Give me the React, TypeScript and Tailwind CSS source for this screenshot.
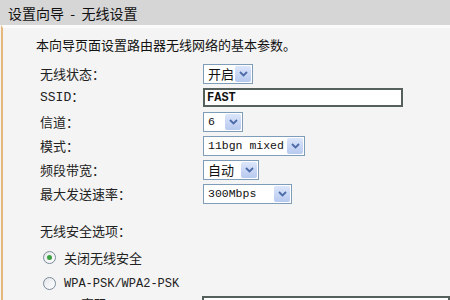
const cjk = "font-['SimSun','Noto_Sans_CJK_SC',sans-serif]"
const mono = "font-['Liberation_Mono','Noto_Sans_CJK_SC',monospace]"

function Arrow() {
  return (
    <span className="flex h-[16px] w-[16px] shrink-0 items-center justify-center rounded-[2px] bg-gradient-to-b from-[#dce6fb] to-[#b7c9ef]">
      <svg width="9" height="6" viewBox="0 0 9 6">
        <path d="M1 1 L4.5 4.5 L8 1" fill="none" stroke="#4d6ba8" strokeWidth="1.8" />
      </svg>
    </span>
  )
}

function Select({ value, width, isMono }: { value: string; width: string; isMono?: boolean }) {
  return (
    <div className={`flex h-[20px] ${width} shrink-0 items-center justify-between border border-[#7f9db9] bg-white pl-[4px] pr-[1px]`}>
      <span className={`${isMono ? `${mono} text-[11.5px]` : `${cjk} text-[13px]`} whitespace-nowrap leading-none text-[#111]`}>{value}</span>
      <Arrow />
    </div>
  )
}

function Row({ label, children, isMono }: { label: string; children: React.ReactNode; isMono?: boolean }) {
  return (
    <div className="flex h-[24px] items-center">
      <span className={`w-[163px] shrink-0 ${isMono ? mono : cjk} text-[13px] text-[#222]`}>{label}</span>
      {children}
    </div>
  )
}

function Radio({ checked, label, isMono }: { checked?: boolean; label: string; isMono?: boolean }) {
  return (
    <div className="flex h-[25px] items-center pl-[40px]">
      <span className="flex h-[13px] w-[13px] items-center justify-center rounded-full border border-[#7a8a99] bg-gradient-to-br from-[#e4e7ea] to-white">
        {checked && <span className="h-[5px] w-[5px] rounded-full bg-[#3aa141]" />}
      </span>
      <span className={`ml-[8px] ${isMono ? `${mono} text-[12px]` : `${cjk} text-[13px]`} text-[#222]`}>{label}</span>
    </div>
  )
}

export default function App() {
  return (
    <div className="h-[300px] w-[450px] overflow-hidden bg-[#f4f4f4]">
      <div className="flex h-[25px] items-center bg-[#d6d6d6] pl-[8px] pt-[1px]">
        <span className={`${cjk} whitespace-pre text-[14px] text-[#111]`}>设置向导  -  无线设置</span>
      </div>
      <div className="ml-[1px] h-[275px] border-l-2 border-t-[3px] border-l-[#e6b77a] border-t-[#fbfbfb] bg-[#f4f4f4]">
        <div className={`pl-[33px] pt-[7px] ${cjk} text-[13px] text-[#111]`}>本向导页面设置路由器无线网络的基本参数。</div>
        <div className="mt-[7px] flex flex-col pl-[37px]">
          <Row label="无线状态：">
            <Select value="开启" width="w-[50px]" />
          </Row>
          <Row label="SSID：" isMono>
            <div className={`flex h-[19px] w-[200px] items-center border-2 border-[#55605c] bg-white pl-[2px] ${mono} text-[12px] font-bold text-[#111]`}>
              FAST
            </div>
          </Row>
          <Row label="信道：">
            <Select value="6" width="w-[40px]" isMono />
          </Row>
          <Row label="模式：">
            <Select value="11bgn mixed" width="w-[102px]" isMono />
          </Row>
          <Row label="频段带宽：">
            <Select value="自动" width="w-[56px]" />
          </Row>
          <Row label="最大发送速率：">
            <Select value="300Mbps" width="w-[89px]" isMono />
          </Row>
        </div>
        <div className={`mt-[15px] pl-[37px] ${cjk} text-[13px] text-[#222]`}>无线安全选项：</div>
        <div className="mt-[5px] flex flex-col gap-[1px]">
          <Radio checked label="关闭无线安全" />
          <Radio label="WPA-PSK/WPA2-PSK" isMono />
        </div>
        <div className="mt-0 flex items-start">
          <span className={`w-[199px] shrink-0 pl-[78px] ${cjk} text-[13px] leading-[16px] text-[#222]`}>密码：</span>
          <div className="h-[20px] flex-1 border-2 border-[#55605c] bg-white" />
        </div>
      </div>
    </div>
  )
}
